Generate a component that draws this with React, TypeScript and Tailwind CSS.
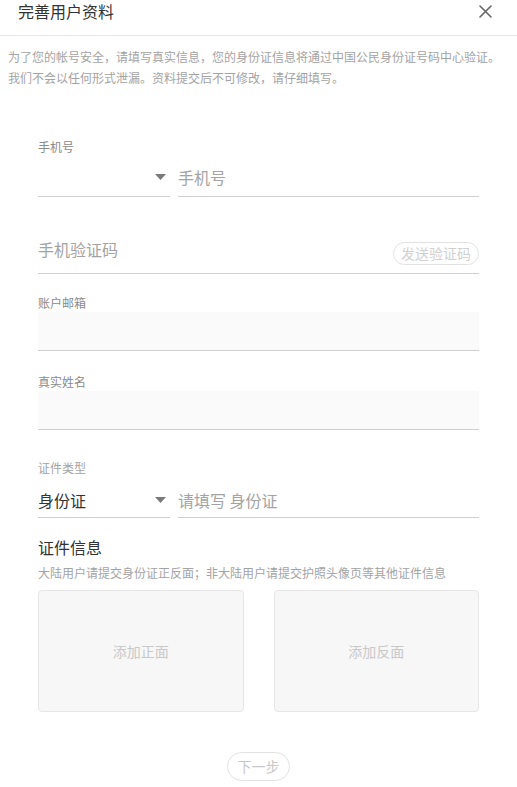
import React from "react";

const font = { fontFamily: '"Noto Sans CJK SC", "Noto Sans", sans-serif' };

function Caret() {
  return (
    <svg width="11" height="6" viewBox="0 0 11 6" className="shrink-0">
      <polygon points="0,0 11,0 5.5,6" fill="#7a7a7a" />
    </svg>
  );
}

export default function App() {
  return (
    <div className="w-[517px] min-h-[787px] bg-white text-[#333]" style={font}>
      {/* header */}
      <div className="h-[36px] border-b border-[#e6e6e6] flex items-start justify-between pl-[18px] pr-[25px]">
        <div className="text-[16px] leading-[22px] text-[#333]">完善用户资料</div>
        <svg width="13" height="13" viewBox="0 0 13 13" className="mt-[5px]">
          <path d="M1 1 L12 12 M12 1 L1 12" stroke="#666" strokeWidth="1.6" strokeLinecap="round" />
        </svg>
      </div>

      {/* description */}
      <div className="px-[8px] pt-[10px] text-[12px] leading-[21px] text-[#a3a3a3]">
        <div className="whitespace-nowrap">
          为了您的帐号安全，请填写真实信息，您的身份证信息将通过中国公民身份证号码中心验证。
        </div>
        <div className="whitespace-nowrap">我们不会以任何形式泄漏。资料提交后不可修改，请仔细填写。</div>
      </div>

      {/* form */}
      <div className="px-[38px] pt-[51px] flex flex-col">
        {/* phone */}
        <div className="text-[12px] leading-[16px] text-[#8a8a8a]">手机号</div>
        <div className="flex gap-[8px]">
          <div className="w-[132px] border-b border-[#cfcfcf] pt-[11px] pb-[8px] flex items-center justify-end pr-[4px] h-[42px]">
            <Caret />
          </div>
          <div className="flex-1 border-b border-[#cfcfcf] pt-[11px] pb-[8px] h-[42px] text-[16px] leading-[22px] text-[#a3a3a3]">
            手机号
          </div>
        </div>

        {/* code */}
        <div className="mt-[33px] border-b border-[#cfcfcf] pt-[8px] pb-[8px] flex items-start justify-between">
          <div className="text-[16px] leading-[22px] text-[#a3a3a3]">手机验证码</div>
          <div className="mt-[4px] h-[23px] px-[7px] rounded-full border border-[#e2e2e2] text-[14px] leading-[21px] text-[#d0d0d0]">
            发送验证码
          </div>
        </div>

        {/* email */}
        <div className="mt-[21px] mb-[1px] text-[12px] leading-[16px] text-[#8a8a8a]">账户邮箱</div>
        <div className="h-[39px] bg-[#fafafa] border-b border-[#cfcfcf]"></div>

        {/* name */}
        <div className="mt-[23px] mb-[1px] text-[12px] leading-[16px] text-[#8a8a8a]">真实姓名</div>
        <div className="h-[39px] bg-[#fafafa] border-b border-[#cfcfcf]"></div>

        {/* id type */}
        <div className="mt-[30px] text-[12px] leading-[16px] text-[#a3a3a3]">证件类型</div>
        <div className="flex gap-[8px]">
          <div className="w-[132px] border-b border-[#cfcfcf] pt-[13px] pb-[6px] flex items-center justify-between pr-[4px]">
            <span className="text-[16px] leading-[22px] text-[#333]">身份证</span>
            <Caret />
          </div>
          <div className="flex-1 border-b border-[#cfcfcf] pt-[13px] pb-[6px] text-[16px] leading-[22px] text-[#a3a3a3]">
            请填写 身份证
          </div>
        </div>

        {/* id info */}
        <div className="mt-[18px] text-[16px] leading-[22px] text-[#333]">证件信息</div>
        <div className="mt-[7px] text-[12px] leading-[16px] text-[#a3a3a3] whitespace-nowrap">
          大陆用户请提交身份证正反面；非大陆用户请提交护照头像页等其他证件信息
        </div>

        <div className="mt-[9px] grid grid-cols-2 gap-[30px]">
          <div className="h-[122px] rounded-[4px] border border-[#e6e6e6] bg-[#f7f7f7] flex items-center justify-center text-[14px] text-[#c8c8c8]">
            添加正面
          </div>
          <div className="h-[122px] rounded-[4px] border border-[#e6e6e6] bg-[#f7f7f7] flex items-center justify-center text-[14px] text-[#c8c8c8]">
            添加反面
          </div>
        </div>

        <div className="mt-[40px] flex justify-center">
          <div className="w-[63px] h-[29px] rounded-full border border-[#e2e2e2] flex items-center justify-center text-[14px] text-[#c8c8c8]">
            下一步
          </div>
        </div>
      </div>
    </div>
  );
}
